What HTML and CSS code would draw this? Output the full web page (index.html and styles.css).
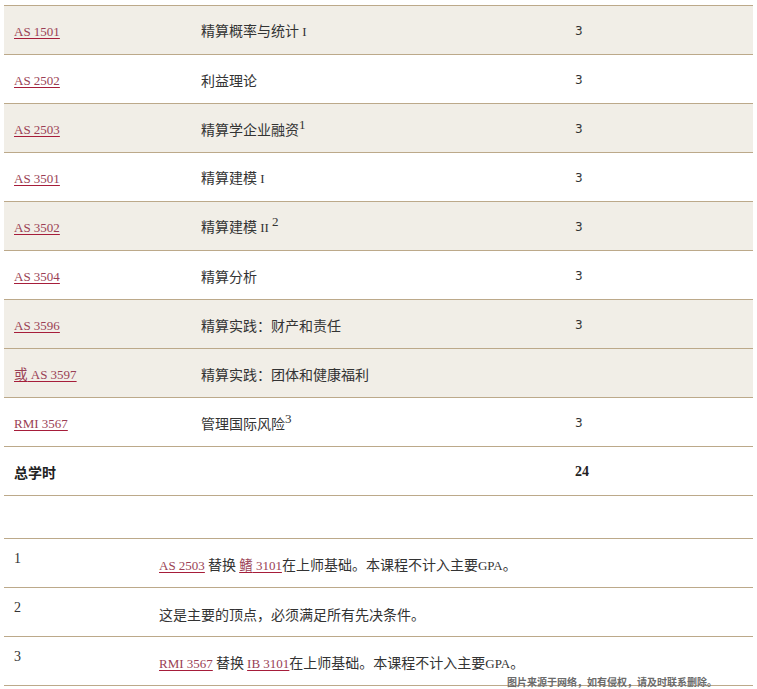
FILE: index.html
```html
<!DOCTYPE html>
<html lang="zh">
<head>
<meta charset="utf-8">
<link rel="stylesheet" href="styles.css">
</head>
<body>
<div class="page">
  <table class="courses">
    <colgroup><col class="c1"><col class="c2"><col class="c3"></colgroup>
    <tbody>
      <tr class="odd"><td><a href="#">AS 1501</a></td><td>精算概率与统计 <span class="lat">I</span></td><td class="hrs">3</td></tr>
      <tr><td><a href="#">AS 2502</a></td><td>利益理论</td><td class="hrs">3</td></tr>
      <tr class="odd"><td><a href="#">AS 2503</a></td><td>精算学企业融资<sup>1</sup></td><td class="hrs">3</td></tr>
      <tr><td><a href="#">AS 3501</a></td><td>精算建模 <span class="lat">I</span></td><td class="hrs">3</td></tr>
      <tr class="odd"><td><a href="#">AS 3502</a></td><td>精算建模 <span class="lat">II</span> <sup>2</sup></td><td class="hrs">3</td></tr>
      <tr><td><a href="#">AS 3504</a></td><td>精算分析</td><td class="hrs">3</td></tr>
      <tr class="odd"><td><a href="#">AS 3596</a></td><td>精算实践<span class="pc">：</span>财产和责任</td><td class="hrs">3</td></tr>
      <tr class="odd"><td><a href="#"><span class="cjk">或</span> AS 3597</a></td><td>精算实践<span class="pc">：</span>团体和健康福利</td><td class="hrs"></td></tr>
      <tr><td><a href="#">RMI 3567</a></td><td>管理国际风险<sup>3</sup></td><td class="hrs">3</td></tr>
      <tr class="total"><td>总学时</td><td></td><td class="hrs">24</td></tr>
    </tbody>
  </table>

  <table class="notes">
    <colgroup><col class="n1"><col class="n2"></colgroup>
    <tbody>
      <tr><td class="num">1</td><td class="txt"><a href="#">AS 2503</a> 替换 <a href="#"><span class="cjk">鳍</span> 3101</a>在上师基础。本课程不计入主要<span class="lat">GPA</span>。</td></tr>
      <tr><td class="num">2</td><td class="txt">这是主要的顶点<span class="pc">，</span>必须满足所有先决条件。</td></tr>
      <tr><td class="num">3</td><td class="txt"><a href="#">RMI 3567</a> 替换 <a href="#">IB 3101</a>在上师基础。本课程不计入主要<span class="lat">GPA</span>。</td></tr>
    </tbody>
  </table>
  <div class="watermark">图片来源于网络<span class="pc">，</span>如有侵权<span class="pc">，</span>请及时联系删除。</div>
</div>
</body>
</html>
```

FILE: styles.css
```css
html, body {
  margin: 0;
  padding: 0;
  background: #ffffff;
}
body {
  font-family: "Noto Sans CJK SC", "Noto Sans", sans-serif;
  font-size: 14px;
  color: #333333;
}
.page {
  position: relative;
  width: 749px;
  height: 684px;
  padding: 5px 4px 0 4px;
  overflow: hidden;
}
table {
  border-collapse: collapse;
  table-layout: fixed;
  width: 749px;
}
td {
  border-top: 1px solid #bca98a;
  border-bottom: 1px solid #bca98a;
  padding: 2px 10px 0 10px;
  height: 46px;
  vertical-align: middle;
  line-height: 18px;
}
col.c1 { width: 187px; }
col.c2 { width: 374px; }
col.c3 { width: 188px; }
tr.odd td { background: #f1eee7; }
a {
  font-family: "Liberation Serif", "Noto Sans CJK SC", serif;
  font-size: 13px;
  color: #9a3f55;
  text-decoration: underline;
  text-decoration-color: #a61d3a;
  text-underline-offset: 2px;
}
a .cjk {
  font-family: "Noto Sans CJK SC", sans-serif;
  font-size: 13.5px;
}
.pc {
  font-family: "Noto Sans CJK TC", sans-serif;
}
.lat {
  font-family: "Liberation Serif", serif;
  font-size: 13px;
}
sup {
  font-family: "Liberation Serif", serif;
  font-size: 13px;
  line-height: 0;
  vertical-align: 6px;
}
.hrs {
  font-family: "DejaVu Sans", sans-serif;
  font-size: 12px;
}
tr.total td {
  font-weight: bold;
  color: #222;
}
tr.total .hrs {
  font-family: "Liberation Serif", serif;
  font-size: 14px;
}
.notes {
  margin-top: 42px;
}
col.n1 { width: 145px; }
col.n2 { width: 604px; }
.notes td.num {
  vertical-align: top;
  padding-top: 11px;
  height: 37px;
  font-family: "Liberation Serif", serif;
  font-size: 14px;
}
.notes td.txt {
  padding-top: 4px;
  height: 44px;
}
.watermark {
  position: absolute;
  left: 507px;
  top: 676px;
  font-size: 10px;
  font-weight: bold;
  color: #6b6b6b;
  line-height: 12px;
  white-space: nowrap;
}
```
